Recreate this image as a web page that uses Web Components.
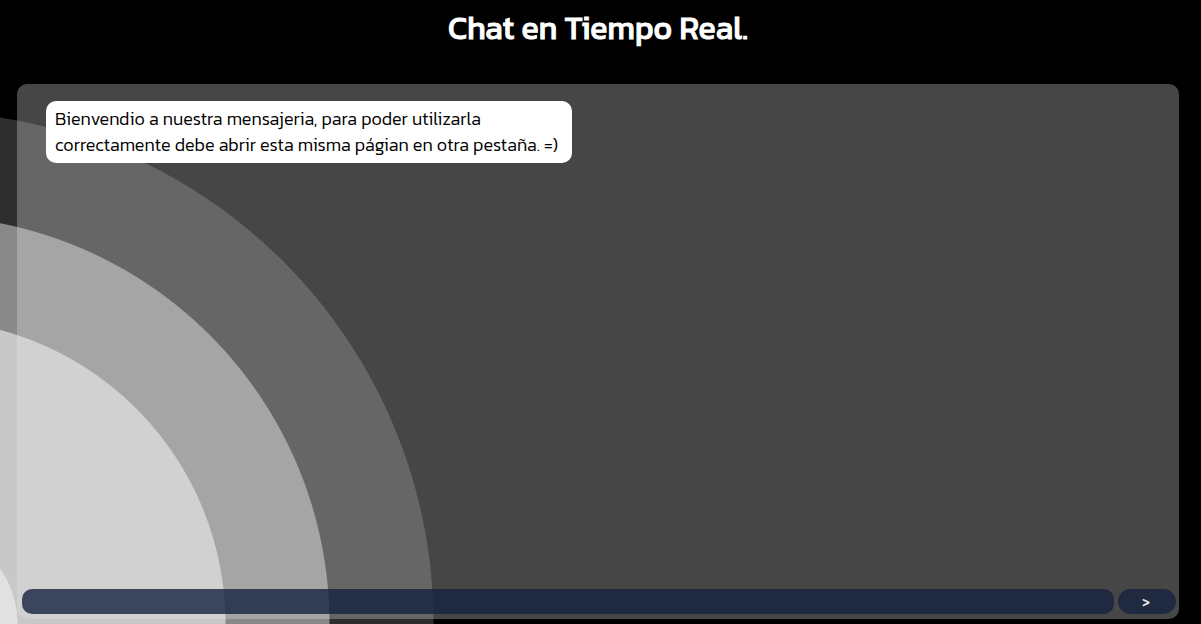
<!DOCTYPE html>
<html lang="es">
<head>
<meta charset="utf-8">
<meta name="viewport" content="width=device-width, initial-scale=1">
<title>Chat en Tiempo Real</title>
<style>
  body { margin: 0; background: #000; font-family: Kanit, Roboto, sans-serif; }
</style>
</head>
<body>
<chat-app>
  <chat-title slot="title">Chat en Tiempo Real.</chat-title>
  <chat-panel>
    <chat-message>Bienvendio a nuestra mensajeria, para poder utilizarla correctamente debe abrir esta misma págian en otra pestaña. =)</chat-message>
    <chat-composer slot="composer"></chat-composer>
  </chat-panel>
</chat-app>
<script>
const define = (name, markup) => customElements.define(name, class extends HTMLElement {
  constructor() {
    super();
    this.attachShadow({ mode: 'open' }).innerHTML = markup;
  }
});

define('chat-app', `
  <style>
    :host {
      display: flex; flex-direction: column; box-sizing: border-box;
      min-height: 100vh; padding: 0 22px 5px 17px;
      background: radial-gradient(circle at -79px 100%,
        #e1e1e1 96px, #c8c8c8 97px 304px, #898989 305px 408px,
        #2e2e2e 409px 512px, #000 513px);
    }
    header { height: 84px; }
    main { flex: 1; display: flex; }
  </style>
  <header><slot name="title"></slot></header>
  <main><slot></slot></main>`);

define('chat-title', `
  <style>
    :host { display: block; text-align: center; color: #fff; }
    h1 {
      margin: 0; padding-top: 4px; font-size: 32px; line-height: 48px;
      font-weight: 400; -webkit-text-stroke: 1px currentColor;
    }
  </style>
  <h1><slot></slot></h1>`);

define('chat-panel', `
  <style>
    :host {
      flex: 1; display: flex; flex-direction: column; box-sizing: border-box;
      padding: 17px 3px 5px 5px; border-radius: 10px;
      background: rgba(233, 233, 233, .3);
    }
    section { flex: 1; padding-left: 24px; }
  </style>
  <section aria-label="Mensajes"><slot></slot></section>
  <slot name="composer"></slot>`);

define('chat-message', `
  <style>
    :host { display: block; }
    p {
      box-sizing: border-box; width: fit-content; max-width: 526px; margin: 0;
      padding: 5px 9px; border-radius: 10px;
      background: #fff; color: #000; font-size: 18px; line-height: 26px; font-weight: 300;
    }
  </style>
  <p><slot></slot></p>`);

define('chat-composer', `
  <style>
    :host { display: block; }
    form { display: flex; gap: 4px; margin: 0; }
    input, button {
      box-sizing: border-box; height: 25px; border: 0; margin: 0; outline: 0;
      background: rgba(21, 34, 62, .8); color: #e9e9e9; font-family: inherit;
    }
    input { flex: 1; min-width: 0; padding: 0 10px; border-radius: 10px; font-size: 14px; }
    button { width: 58px; padding: 2px 2px 0 0; border-radius: 15px; font-size: 14px; font-weight: 500; }
  </style>
  <form>
    <input type="text" aria-label="Mensaje">
    <button type="button" aria-label="Enviar">&gt;</button>
  </form>`);
</script>
</body>
</html>
